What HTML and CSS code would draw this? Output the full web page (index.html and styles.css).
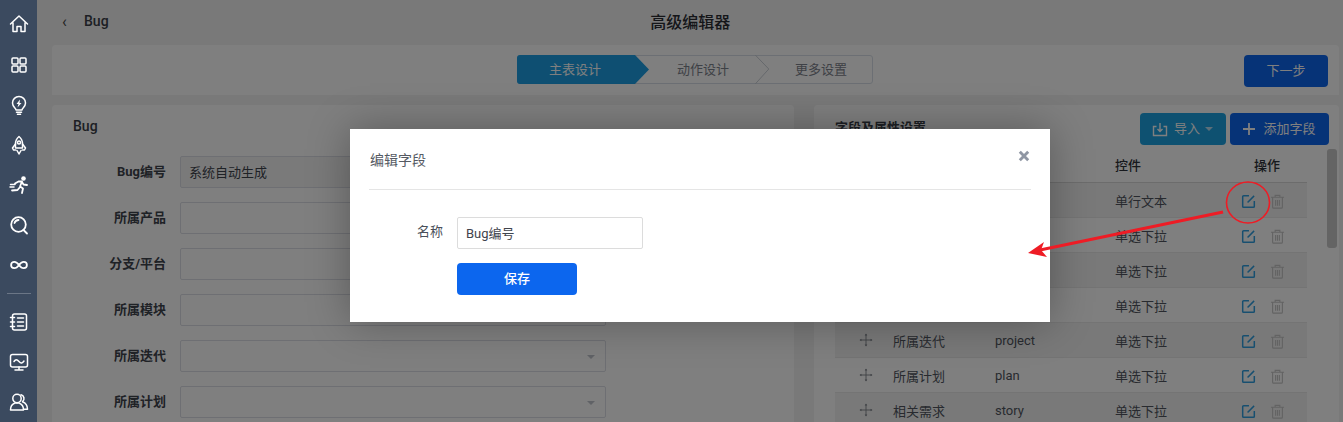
FILE: index.html
```html
<!DOCTYPE html>
<html lang="zh">
<head>
<meta charset="utf-8">
<title>高级编辑器</title>
<link rel="stylesheet" href="styles.css">
</head>
<body>
<div class="app">
  <aside class="side">
    <svg class="nav-icon" viewBox="0 0 20 20"><path d="M1.500 10 10 2l8.500 8M4 8.500V17.500h4V12.500h4v5h4V8.500"/></svg>
    <svg class="nav-icon" viewBox="0 0 20 20"><rect x="3" y="3" width="6" height="6" rx="1"/><rect x="11" y="3" width="6" height="6" rx="1"/><rect x="3" y="11" width="6" height="6" rx="1"/><rect x="11" y="11" width="6" height="6" rx="1"/></svg>
    <svg class="nav-icon" viewBox="0 0 20 20"><path d="M7 15c0-2-3.500-3.200-3.500-7a6.500 6.500 0 0 1 13 0c0 3.800-3.500 5-3.500 7z"/><path d="M7.500 17.300h5M8.500 19.300h3"/><path class="solid" d="M11 4.500 7.500 9h2l-1 3.500L12.500 8h-2z"/></svg>
    <svg class="nav-icon" viewBox="0 0 20 20"><path d="M10 1.500c2.500 2 3.500 4.500 3.500 7.500v4h-7V9c0-3 1-5.500 3.500-7.500z"/><circle cx="10" cy="7.500" r="1.500"/><path d="M6.500 9 3.500 13l1 2h2M13.500 9l3 4-1 2h-2M8 15.500 10 19l2-3.500"/></svg>
    <svg class="nav-icon" viewBox="0 0 20 20"><circle class="solid" cx="14.500" cy="3.500" r="2.300"/><path class="thick" d="M6 8.500 9.500 6.500h3.500L11 11.500l3 2-1 4.500M11.500 11.500 8.500 15l-5.500.5M13 7l1.500 2.500L18 10"/><path d="M1.500 9.500H6M1 12h4"/></svg>
    <svg class="nav-icon" viewBox="0 0 20 20"><circle class="thick" cx="9.500" cy="9.500" r="7.300"/><path class="thick" d="m14.500 15 3.500 3.500M9.500 5A4.500 4.500 0 0 0 5.500 8"/></svg>
    <svg class="nav-icon" viewBox="0 0 20 20"><path class="thick" d="M10 10C8.500 7.800 7 6.800 5.300 6.800a3.200 3.200 0 0 0 0 6.400c1.700 0 3.200-1 4.700-3.200 1.500-2.200 3-3.200 4.700-3.200a3.200 3.200 0 0 1 0 6.400c-1.700 0-3.200-1-4.700-3.200z"/></svg>
    <hr class="side-rule">
    <svg class="nav-icon" viewBox="0 0 20 20"><rect x="3.500" y="2" width="14" height="16" rx="2"/><path d="M1.500 5.500h4M1.500 10h4M1.500 14.500h4M8.500 6h6M8.500 10h6M8.500 14h6"/></svg>
    <svg class="nav-icon" viewBox="0 0 20 20"><rect x="1.500" y="2.500" width="17" height="12.500" rx="2"/><path d="M5 9.500c1.500-2.500 3-2.500 5 0s3.500 1.500 5-.5M6 18h8M10 15v3"/></svg>
    <svg class="nav-icon" viewBox="0 0 20 20"><circle cx="8" cy="6.500" r="4.200"/><path d="M1.500 18c0-4.500 2.500-6.300 4.500-7h4c2 .7 4.500 2.500 4.500 7zM12 2.700a4 4 0 0 1 1.500 7c2.500 1 5 2.500 5 7.500h-3.500"/></svg>
  </aside>

  <main class="main">
    <header class="topbar">
      <span class="back">‹</span>
      <span class="crumb">Bug</span>
      <h1 class="page-title">高级编辑器</h1>
    </header>

    <section class="stepbar">
      <div class="steps">
        <div class="step step-active">主表设计</div>
        <div class="step step-mid">动作设计<svg class="chev" viewBox="0 0 15 30"><path d="M0 0 14 14.500 0 30"/></svg></div>
        <div class="step step-last">更多设置</div>
      </div>
      <button class="btn btn-primary btn-next">下一步</button>
    </section>

    <div class="panels">
      <section class="panel panel-left">
        <h2 class="panel-title">Bug</h2>
        <div class="form-row"><label class="form-label">Bug编号</label><div class="field field-filled">系统自动生成</div></div>
        <div class="form-row"><label class="form-label">所属产品</label><div class="field"></div></div>
        <div class="form-row"><label class="form-label">分支/平台</label><div class="field"></div></div>
        <div class="form-row"><label class="form-label">所属模块</label><div class="field"></div></div>
        <div class="form-row"><label class="form-label">所属迭代</label><div class="field field-select"></div></div>
        <div class="form-row"><label class="form-label">所属计划</label><div class="field field-select"></div></div>
      </section>

      <section class="panel panel-right">
        <div class="panel-head">
          <h2 class="panel-title panel-title-right">字段及属性设置</h2>
          <button class="btn btn-cyan btn-import">
            <svg class="btn-icon" viewBox="0 0 16 16"><path d="M4.500 5.500H1.500V14.500H14.500V5.500H11.500M8 2v8M5.500 8 8 10.500 10.500 8"/></svg>导入<span class="caret"></span>
          </button>
          <button class="btn btn-primary btn-add">
            <svg class="btn-icon" viewBox="0 0 16 16"><path d="M8 2v12M2 8h12"/></svg>添加字段
          </button>
        </div>
        <div class="table-wrap">
          <div class="table">
            <div class="row row-head"><span class="c-drag"></span><span class="c-name">名称</span><span class="c-key">字段</span><span class="c-ctrl">控件</span><span class="c-op">操作</span></div>
            <div class="row row-odd"><span class="c-drag"><svg class="i-drag" viewBox="0 0 16 16"><use href="#drag"/></svg></span><span class="c-name">Bug编号</span><span class="c-key">id</span><span class="c-ctrl">单行文本</span><span class="c-op"><svg class="i-edit" viewBox="0 0 16 16"><use href="#edit"/></svg><svg class="i-trash" viewBox="0 0 16 16"><use href="#trash"/></svg></span></div>
            <div class="row"><span class="c-drag"><svg class="i-drag" viewBox="0 0 16 16"><use href="#drag"/></svg></span><span class="c-name">所属产品</span><span class="c-key">product</span><span class="c-ctrl">单选下拉</span><span class="c-op"><svg class="i-edit" viewBox="0 0 16 16"><use href="#edit"/></svg><svg class="i-trash" viewBox="0 0 16 16"><use href="#trash"/></svg></span></div>
            <div class="row row-odd"><span class="c-drag"><svg class="i-drag" viewBox="0 0 16 16"><use href="#drag"/></svg></span><span class="c-name">分支/平台</span><span class="c-key">branch</span><span class="c-ctrl">单选下拉</span><span class="c-op"><svg class="i-edit" viewBox="0 0 16 16"><use href="#edit"/></svg><svg class="i-trash" viewBox="0 0 16 16"><use href="#trash"/></svg></span></div>
            <div class="row"><span class="c-drag"><svg class="i-drag" viewBox="0 0 16 16"><use href="#drag"/></svg></span><span class="c-name">所属模块</span><span class="c-key">module</span><span class="c-ctrl">单选下拉</span><span class="c-op"><svg class="i-edit" viewBox="0 0 16 16"><use href="#edit"/></svg><svg class="i-trash" viewBox="0 0 16 16"><use href="#trash"/></svg></span></div>
            <div class="row row-odd"><span class="c-drag"><svg class="i-drag" viewBox="0 0 16 16"><use href="#drag"/></svg></span><span class="c-name">所属迭代</span><span class="c-key">project</span><span class="c-ctrl">单选下拉</span><span class="c-op"><svg class="i-edit" viewBox="0 0 16 16"><use href="#edit"/></svg><svg class="i-trash" viewBox="0 0 16 16"><use href="#trash"/></svg></span></div>
            <div class="row"><span class="c-drag"><svg class="i-drag" viewBox="0 0 16 16"><use href="#drag"/></svg></span><span class="c-name">所属计划</span><span class="c-key">plan</span><span class="c-ctrl">单选下拉</span><span class="c-op"><svg class="i-edit" viewBox="0 0 16 16"><use href="#edit"/></svg><svg class="i-trash" viewBox="0 0 16 16"><use href="#trash"/></svg></span></div>
            <div class="row row-odd"><span class="c-drag"><svg class="i-drag" viewBox="0 0 16 16"><use href="#drag"/></svg></span><span class="c-name">相关需求</span><span class="c-key">story</span><span class="c-ctrl">单选下拉</span><span class="c-op"><svg class="i-edit" viewBox="0 0 16 16"><use href="#edit"/></svg><svg class="i-trash" viewBox="0 0 16 16"><use href="#trash"/></svg></span></div>
          </div>
          <div class="scrollbar"></div>
        </div>
      </section>
    </div>
  </main>
</div>

<div class="overlay"></div>

<div class="modal">
  <div class="modal-head">
    <span class="modal-title">编辑字段</span>
    <svg class="modal-close" viewBox="0 0 10 10"><path d="M1.500 1.500 8.500 8.500M8.500 1.500 1.500 8.500"/></svg>
  </div>
  <div class="modal-body">
    <div class="modal-row">
      <label class="modal-label">名称</label>
      <div class="modal-input">Bug编号</div>
    </div>
    <button class="btn modal-save">保存</button>
  </div>
</div>

<svg class="annotation" viewBox="0 0 1343 422">
  <ellipse class="ring" cx="1248" cy="202.500" rx="21.500" ry="20.500"/>
  <path class="arrow-line" d="M1223 212 1040 250"/>
  <path class="arrow-head" d="M1028 253 1044 242 1041 250 1047 257z"/>
</svg>

<svg class="defs" aria-hidden="true">
  <defs>
    <g id="drag"><path d="M8 1v14M1 8h14" fill="none" stroke="currentColor" stroke-width="1"/><path d="M6.500 2.800 8 .8l1.500 2zM6.500 13.200 8 15.200l1.500-2zM2.800 6.500.8 8l2 1.500zM13.200 6.500 15.200 8l-2 1.500z" fill="currentColor"/></g>
    <g id="edit" fill="none" stroke="currentColor" stroke-width="1.600"><path d="M8.500 1.800H2.800a1 1 0 0 0-1 1v10.400a1 1 0 0 0 1 1h10.400a1 1 0 0 0 1-1V7.500"/><path d="M7 9 14 2"/></g>
    <g id="trash" fill="none" stroke="currentColor" stroke-width="1.200"><path d="M1 3.500h14M5.500 3.500V1.500h5v2M2.800 3.500V14a1 1 0 0 0 1 1h8.400a1 1 0 0 0 1-1V3.500M6 6.500v6M8 6.500v6M10 6.500v6"/></g>
  </defs>
</svg>
</body>
</html>
```
FILE: styles.css
```css
* { box-sizing: border-box; }

html, body {
  margin: 0;
  height: 422px;
  overflow: hidden;
}

body {
  font-family: "Roboto", "Liberation Sans", "Noto Sans CJK SC", sans-serif;
  font-size: 13px;
  color: #4a4f5a;
  background: #f2f2f2;
}

.app {
  display: flex;
  height: 422px;
  overflow: hidden;
}

/* sidebar sits above the mask */
.side {
  position: relative;
  z-index: 3;
  flex: 0 0 37px;
  display: flex;
  flex-direction: column;
  align-items: center;
  padding-top: 14px;
  background: #3b4a5f;
}

.nav-icon {
  flex: none;
  width: 20px;
  height: 20px;
  margin-bottom: 20px;
  fill: none;
  stroke: #fff;
  stroke-width: 1.500;
  stroke-linecap: round;
  stroke-linejoin: round;
}
.nav-icon:first-child { margin-bottom: 21px; }
.nav-icon .solid { fill: #fff; stroke: none; }
.nav-icon .thick { stroke-width: 1.800; }

.side-rule {
  flex: none;
  width: 24px;
  margin: -2px 0 18px;
  border: 0;
  border-top: 1px solid #6b7686;
}

.main {
  flex: 1;
  min-width: 0;
  display: flex;
  flex-direction: column;
  padding: 0 4px 0 15px;
}

.topbar {
  position: relative;
  flex: 0 0 45px;
  display: flex;
  align-items: center;
  padding: 0 0 3px 10px;
}
.back { font-size: 16px; width: 22px; color: #444; }
.crumb { font-weight: 500; font-size: 14px; color: #3a3f48; }
.page-title {
  flex: 1;
  margin: 0 67px 0 0;
  text-align: center;
  font-size: 16px;
  font-weight: 500;
  color: #2a2d33;
}

.stepbar {
  position: relative;
  flex: 0 0 50px;
  display: flex;
  justify-content: center;
  align-items: center;
  padding-bottom: 1px;
  background: #fff;
  border-radius: 4px 4px 0 0;
}

.steps {
  display: flex;
  width: 356px;
  height: 29px;
  margin-right: 1px;
  border: 1px solid #d8dfe8;
  border-radius: 3px;
  color: #7d828c;
}
.step {
  position: relative;
  display: flex;
  align-items: center;
  justify-content: center;
  height: 29px;
  margin-top: -1px;
  padding-bottom: 2px;
}
.step-active {
  flex: 0 0 132px;
  margin-left: -1px;
  margin-right: -13px;
  padding-right: 16px;
  color: #fff;
  background: #1c9fe4;
  border-radius: 3px 0 0 3px;
  clip-path: polygon(0 0, 118px 0, 132px 50%, 118px 100%, 0 100%);
}
.step-mid { flex: 0 0 120px; padding-left: 14px; }
.step-last { flex: 1; padding-left: 14px; }
.chev {
  position: absolute;
  top: 0;
  right: -14px;
  width: 15px;
  height: 29px;
  fill: none;
  stroke: #c9ced6;
  stroke-width: 1;
}

.btn {
  display: flex;
  align-items: center;
  justify-content: center;
  border: 0;
  border-radius: 4px;
  font: inherit;
  color: #fff;
  padding: 0 0 3px;
}
.btn-primary { background: #0c66ee; }
.btn-cyan { background: #1ca3e3; }
.btn-next {
  position: absolute;
  right: 11px;
  top: 10px;
  width: 84px;
  height: 32px;
}

.panels {
  flex: 1;
  display: flex;
  gap: 20px;
  margin-top: 10px;
}
.panel {
  background: #fff;
  border-radius: 4px 4px 0 0;
}
.panel-left {
  flex: 0 0 742px;
  padding: 0 0 0 21px;
}
.panel-right {
  flex: 1;
  min-width: 0;
}
.panel-title {
  margin: 0;
  font-size: 13px;
  font-weight: 700;
  color: #3a3f48;
}
.panel-left .panel-title {
  padding-top: 13px;
  height: 51px;
  font-size: 14px;
  font-weight: 500;
}

.form-row {
  display: flex;
  align-items: center;
  height: 32px;
  margin-bottom: 14px;
}
.form-label {
  flex: 0 0 93px;
  margin-top: -3px;
  text-align: right;
  font-weight: 700;
  color: #3f444d;
}
.field {
  position: relative;
  width: 426px;
  height: 32px;
  margin-left: 14px;
  padding-left: 8px;
  line-height: 31px;
  border: 1px solid #dcdfe6;
  border-radius: 2px;
  background: #fff;
  color: #3f444d;
}
.field-filled { background: #f5f5f5; }
.field-select::after {
  content: "";
  position: absolute;
  top: 14px;
  right: 10px;
  border: 4px solid transparent;
  border-top-color: #c0c4cc;
  border-bottom-width: 0;
}

.panel-head {
  position: relative;
  display: flex;
  align-items: center;
  gap: 4px;
  height: 44px;
  padding: 8px 10px 4px 21px;
}
.panel-title-right { flex: 1; padding-bottom: 6px; }
.btn-import { width: 86px; height: 32px; padding-right: 1px; }
.btn-add { width: 99px; height: 32px; padding-right: 2px; }
.btn-icon {
  width: 16px;
  height: 16px;
  margin-top: 3px;
  margin-right: 6px;
  fill: none;
  stroke: #fff;
  stroke-width: 1.400;
}
.btn-add .btn-icon { stroke-width: 1.800; }
.caret {
  margin-left: 5px;
  margin-top: 3px;
  border: 4px solid transparent;
  border-top-color: #b9dff2;
  border-bottom-width: 0;
}

.table-wrap {
  position: relative;
  padding-left: 21px;
}
.table { width: 472px; }
.row {
  display: flex;
  align-items: center;
  height: 35px;
  border-bottom: 1px solid #e8e8e8;
  color: #50555e;
}
.row-head {
  height: 34px;
  padding-bottom: 3px;
  border-bottom-color: #d8d8d8;
  font-weight: 500;
  color: #2f333a;
}
.row-odd { background: #f3f3f3; }
.c-drag { flex: 0 0 58px; display: flex; justify-content: center; padding-left: 3px; }
.c-name { flex: 0 0 102px; }
.c-key { flex: 0 0 120px; }
.c-ctrl { flex: 0 0 126px; }
.c-op { flex: 1; display: flex; align-items: center; gap: 14px; }
.row-head .c-op { padding-left: 13px; }
.i-drag { width: 14px; height: 14px; color: #7c8088; }
.i-edit { width: 15px; height: 15px; margin-top: 2px; color: #2f9fe0; }
.i-trash { width: 15px; height: 15px; margin-top: 2px; color: #c6c6c6; }

.scrollbar {
  position: absolute;
  top: 0;
  right: 2px;
  width: 10px;
  height: 99px;
  border-radius: 3px;
  background: #c8c8c8;
}

.overlay {
  position: absolute;
  inset: 0;
  z-index: 2;
  background: rgba(0, 0, 0, 0.5);
}

.modal {
  position: absolute;
  left: 350px;
  top: 129px;
  z-index: 4;
  width: 700px;
  height: 193px;
  padding: 0 19px;
  background: #fff;
  box-shadow: 0 0 40px rgba(0, 0, 0, 0.3);
}
.modal-head {
  position: relative;
  height: 61px;
  padding: 20px 1px 0;
  border-bottom: 1px solid #e5e5e5;
  font-size: 14px;
  color: #555a63;
}
.modal-close {
  position: absolute;
  top: 21px;
  right: 1px;
  width: 12px;
  height: 12px;
  fill: none;
  stroke: #8f96a3;
  stroke-width: 2.400;
}
.modal-body { padding: 27px 0 0 88px; }
.modal-row { display: flex; align-items: center; gap: 14px; }
.modal-label {
  width: 26px;
  margin-left: -40px;
  margin-top: -6px;
  white-space: nowrap;
  color: #4a4f5a;
}
.modal-input {
  width: 186px;
  height: 32px;
  padding-left: 8px;
  line-height: 31px;
  border: 1px solid #dcdcdc;
  border-radius: 2px;
  color: #3f444d;
}
.modal-save {
  width: 120px;
  height: 32px;
  margin-top: 14px;
  background: #0c66ee;
  font-weight: 500;
}

.annotation {
  position: absolute;
  inset: 0;
  z-index: 5;
  width: 1343px;
  height: 422px;
  pointer-events: none;
}
.ring { fill: none; stroke: #ee1c25; stroke-width: 1.600; }
.arrow-line { fill: none; stroke: #ee1c25; stroke-width: 3; }
.arrow-head { fill: #ee1c25; }

.defs { position: absolute; width: 0; height: 0; }
```
